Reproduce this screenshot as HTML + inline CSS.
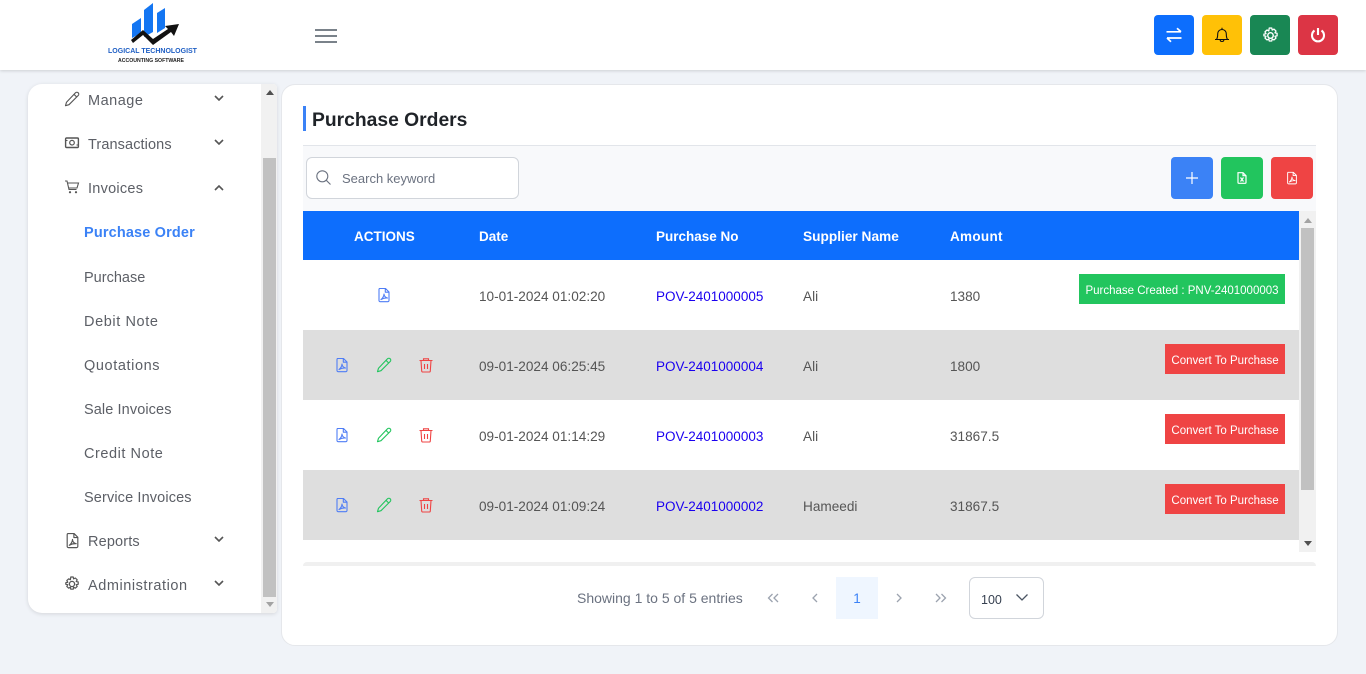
<!DOCTYPE html>
<html lang="en"><head><meta charset="utf-8"><title>Purchase Orders</title>
<style>
*{box-sizing:border-box}
html,body{margin:0;padding:0;width:1366px;height:674px;overflow:hidden;background:#f0f3f8;font-family:"Liberation Sans",sans-serif;color:#555}
.a{position:absolute}
.t{position:absolute;white-space:nowrap;line-height:20px;font-size:14px}
.nav{color:#5c5f66;font-size:14.5px;margin-top:1px}
.sub{color:#5c5f66;font-size:14.5px;margin-top:1px}
.th{color:#fff;font-weight:bold;font-size:13.5px;margin-top:1px}
.td{color:#555;font-size:13.6px;margin-top:1px}
.lnk{color:#1a00f0;font-size:13.5px;margin-top:1px}
.b{position:absolute;color:#fff;font-size:11.5px;line-height:35px;height:30px;text-align:center;white-space:nowrap}
.r{background:#ef4444;left:1165px;width:120px}
svg{position:absolute;overflow:visible;fill:none}
</style></head><body>
<svg width="0" height="0" style="position:absolute">
<defs>
<symbol id="pdf" viewBox="0 0 16 16"><path d="M3.500 1.500h6l3.500 3.500v8.500a1.200 1.200 0 0 1-1.200 1.200H4.200A1.200 1.200 0 0 1 3 13.500V2.700A1.200 1.200 0 0 1 3.500 1.500z M9.300 1.500v3.700H13 M5 12.500c1.500-1 3-3.500 3-5.500 0 2 1.500 3.700 3.500 4-2-.2-4.500.3-6.500 1.500z" stroke="currentColor" stroke-width="1.100" fill="none" stroke-linejoin="round"/></symbol>
<symbol id="pen" viewBox="0 0 16 16"><path d="M11.500 1.800a1.700 1.700 0 0 1 2.700 2.700L5 13.700l-3.500 1 1-3.500zM10 3.300l2.700 2.700" stroke="currentColor" stroke-width="1.100" fill="none" stroke-linejoin="round"/></symbol>
<symbol id="trash" viewBox="0 0 16 16"><path d="M1.500 3.500h13M5.500 3.500V1.800h5v1.700M3 3.500l.7 10.500a1 1 0 0 0 1 1h6.600a1 1 0 0 0 1-1L13 3.500M6.500 7v5M9.500 7v5" stroke="currentColor" stroke-width="1.100" fill="none"/></symbol>
<symbol id="chev" viewBox="0 0 10 6"><path d="M1 1l4 4 4-4" stroke="#555" stroke-width="1.600" fill="none"/></symbol>
<symbol id="gear" viewBox="0 0 16 16"><circle cx="8" cy="8" r="2.600" stroke="currentColor" stroke-width="1.300" fill="none"/><path d="M6.800 1h2.400l.4 1.900 1.700-.9 1.900 1.800-1 1.700 2 .4v2.400l-2 .4 1 1.700-1.900 1.800-1.700-.9-.4 1.900H6.800l-.4-1.900-1.700.9-1.900-1.800 1-1.700-2-.4V6.700l2-.4-1-1.700L4.700 2.800l1.700.9z" stroke="currentColor" stroke-width="1.200" stroke-linejoin="round" fill="none"/></symbol>
</defs></svg>

<!-- Header -->
<div class="a" style="left:0;top:0;width:1366px;height:70px;background:#fff;box-shadow:0 1px 3px rgba(0,0,0,.15)"></div>
<svg style="left:100px;top:0" width="105" height="70" viewBox="0 0 105 70">
<path d="M32 24L41 18V33L32 38zM44 10L53 3V32L44 37zM57 13L65 8V28L57 33z" fill="#1476f2"/>
<path d="M31 40L43 30L53 39L68 29L65 26L79 24L74 36L71 32L53 45L43 35L33 43z" fill="#111"/>
</svg>
<div class="t" style="left:108px;top:47px;line-height:10px;font-size:7px;font-weight:bold;color:#1f5fc4;width:89px;text-align:center">LOGICAL TECHNOLOGIST</div>
<div class="t" style="left:118px;top:56px;line-height:10px;font-size:5.200px;font-weight:bold;color:#222;width:65px;text-align:center">ACCOUNTING SOFTWARE</div>
<div class="a" style="left:315px;top:29px;width:22px;height:2px;background:#7a828a"></div>
<div class="a" style="left:315px;top:35px;width:22px;height:2px;background:#7a828a"></div>
<div class="a" style="left:315px;top:41px;width:22px;height:2px;background:#7a828a"></div>

<div class="a" style="left:1154px;top:15px;width:40px;height:40px;background:#0d6efd;border-radius:4px"></div>
<svg style="left:1166px;top:27px" width="16" height="16" viewBox="0 0 16 16"><path d="M.5 4.800h14.500M11 1.200l4 3.600M15.500 11H1M5 14.800L1 11" stroke="#fff" stroke-width="1.700"/></svg>
<div class="a" style="left:1202px;top:15px;width:40px;height:40px;background:#ffc107;border-radius:4px"></div>
<svg style="left:1214px;top:27px" width="16" height="16" viewBox="0 0 16 16"><path d="M1 12.500h14M2.500 12.500c1-1.500 1.200-3 1.200-5.500 0-2.600 1.800-4.500 4.300-4.500s4.300 1.900 4.300 4.500c0 2.500.2 4 1.200 5.500M6.200 13c0 2 3.600 2 3.600 0M8 .8v1.700" stroke="#111" stroke-width="1.100"/></svg>
<div class="a" style="left:1250px;top:15px;width:40px;height:40px;background:#198754;border-radius:4px"></div>
<svg style="left:1261.500px;top:26.500px;color:#fff" width="17" height="17"><use href="#gear"/></svg>
<div class="a" style="left:1298px;top:15px;width:40px;height:40px;background:#dc3545;border-radius:4px"></div>
<svg style="left:1310px;top:27px" width="16" height="16" viewBox="0 0 16 16"><path d="M8 1v7M4.500 3.500a6 6 0 1 0 7 0" stroke="#fff" stroke-width="2.100"/></svg>

<!-- Sidebar -->
<div class="a" style="left:28px;top:84px;width:249px;height:529px;background:#fff;border-radius:14px 4px 4px 14px;box-shadow:0 1px 4px rgba(0,0,0,.12)"></div>
<div class="a" style="left:261px;top:84px;width:16px;height:529px;background:#f1f1f1;border-radius:0 4px 4px 0"></div>
<div class="a" style="left:263px;top:158px;width:13px;height:439px;background:#c1c1c1"></div>
<div class="a" style="left:266px;top:90px;width:0;height:0;border-left:4px solid transparent;border-right:4px solid transparent;border-bottom:5px solid #505050"></div>
<div class="a" style="left:266px;top:602px;width:0;height:0;border-left:4px solid transparent;border-right:4px solid transparent;border-top:5px solid #a3a3a3"></div>

<svg style="left:64px;top:91px;color:#555" width="16" height="16"><use href="#pen"/></svg>
<div class="t nav" style="left:88px;top:90px;letter-spacing:.5px">Manage</div>
<svg style="left:214px;top:95px" width="10" height="6"><use href="#chev"/></svg>
<svg style="left:65px;top:136px" width="14" height="14" viewBox="0 0 14 14"><rect x=".6" y="2" width="12.800" height="9.500" rx="1" stroke="#555" stroke-width="1.400"/><circle cx="7" cy="6.700" r="2.300" stroke="#555" stroke-width="1.200"/><path d="M.5 4.500h2M11.500 9h2" stroke="#555"/></svg>
<div class="t nav" style="left:88px;top:134px;letter-spacing:.1px">Transactions</div>
<svg style="left:214px;top:139px" width="10" height="6"><use href="#chev"/></svg>
<svg style="left:65px;top:180px" width="14" height="14" viewBox="0 0 14 14"><path d="M0 1h2l2 8.500h7.500M3 3h10.500l-1.500 5H4" stroke="#555" stroke-width="1.100"/><circle cx="5" cy="12.200" r="1.100" fill="#555"/><circle cx="11" cy="12.200" r="1.100" fill="#555"/></svg>
<div class="t nav" style="left:88px;top:178px;letter-spacing:.25px">Invoices</div>
<svg style="left:214px;top:185px;transform:rotate(180deg)" width="10" height="6"><use href="#chev"/></svg>

<div class="t" style="left:84px;top:223px;color:#3b82f6;font-weight:bold;font-size:14.500px;letter-spacing:.15px">Purchase Order</div>
<div class="t sub" style="left:84px;top:267px">Purchase</div>
<div class="t sub" style="left:84px;top:311px;letter-spacing:.6px">Debit Note</div>
<div class="t sub" style="left:84px;top:355px;letter-spacing:.6px">Quotations</div>
<div class="t sub" style="left:84px;top:399px;letter-spacing:.1px">Sale Invoices</div>
<div class="t sub" style="left:84px;top:443px;letter-spacing:.55px">Credit Note</div>
<div class="t sub" style="left:84px;top:487px;letter-spacing:.13px">Service Invoices</div>

<svg style="left:64px;top:532px;color:#555" width="17" height="17"><use href="#pdf"/></svg>
<div class="t nav" style="left:88px;top:531px;letter-spacing:.15px">Reports</div>
<svg style="left:214px;top:536px" width="10" height="6"><use href="#chev"/></svg>
<svg style="left:64px;top:576px;color:#555" width="16" height="16"><use href="#gear"/></svg>
<div class="t nav" style="left:88px;top:575px;letter-spacing:.55px">Administration</div>
<svg style="left:214px;top:580px" width="10" height="6"><use href="#chev"/></svg>

<!-- Card -->
<div class="a" style="left:281px;top:84px;width:1057px;height:562px;background:#fff;border:1px solid #e5e7eb;border-radius:14px"></div>
<div class="a" style="left:303px;top:106px;width:3px;height:25px;background:#3b82f6"></div>
<div class="t" style="left:312px;top:109px;line-height:24px;font-size:19.300px;font-weight:bold;color:#1f2328">Purchase Orders</div>
<div class="a" style="left:303px;top:145px;width:1013px;height:66px;background:#f8f9fb;border-top:1px solid #e2e5ea"></div>
<div class="a" style="left:306px;top:157px;width:213px;height:42px;background:#fff;border:1px solid #d1d5db;border-radius:6px"></div>
<svg style="left:316px;top:170px" width="15" height="15" viewBox="0 0 15 15"><circle cx="6.300" cy="6.300" r="5.500" stroke="#6b7280" stroke-width="1.100"/><path d="M10.300 10.300l4.200 4.200" stroke="#6b7280" stroke-width="1.100"/></svg>
<div class="t" style="left:342px;top:169px;font-size:13px;color:#6b7280">Search keyword</div>

<div class="a" style="left:1171px;top:157px;width:42px;height:42px;background:#3b82f6;border-radius:4px"></div>
<svg style="left:1186px;top:172px" width="12" height="12"><path d="M6 0v12M0 6h12" stroke="#fff" stroke-width="1.200"/></svg>
<div class="a" style="left:1221px;top:157px;width:42px;height:42px;background:#22c55e;border-radius:4px"></div>
<svg style="left:1236px;top:172px" width="12" height="12" viewBox="0 0 12 12"><path d="M2 .7h5l3 3v6.800a.8.8 0 0 1-.8.800H2.800a.8.8 0 0 1-.8-.8zM7 .7v3h3M4.500 5.500l3 4M7.500 5.500l-3 4" stroke="#fff" stroke-width="1.200"/></svg>
<div class="a" style="left:1271px;top:157px;width:42px;height:42px;background:#ef4444;border-radius:4px"></div>
<svg style="left:1285px;top:171px;color:#fff" width="14" height="14"><use href="#pdf"/></svg>

<!-- Table -->
<div class="a" style="left:303px;top:211px;width:996px;height:49px;background:#0d6efd"></div>
<div class="t th" style="left:354px;top:226px">ACTIONS</div>
<div class="t th" style="left:479px;top:226px">Date</div>
<div class="t th" style="left:656px;top:226px">Purchase No</div>
<div class="t th" style="left:803px;top:226px;font-size:13.700px">Supplier Name</div>
<div class="t th" style="left:950px;top:226px;letter-spacing:.3px">Amount</div>

<div class="a" style="left:303px;top:330px;width:996px;height:70px;background:#dedede"></div>
<div class="a" style="left:303px;top:470px;width:996px;height:70px;background:#dedede"></div>

<svg style="left:376px;top:287px;color:#4f7df5" width="16" height="16"><use href="#pdf"/></svg>
<div class="t td" style="left:479px;top:286px">10-01-2024 01:02:20</div>
<div class="t lnk" style="left:656px;top:286px">POV-2401000005</div>
<div class="t td" style="left:803px;top:286px">Ali</div>
<div class="t td" style="left:950px;top:286px">1380</div>
<div class="b" style="left:1079px;top:274px;width:206px;background:#22c55e">Purchase Created : PNV-2401000003</div>

<svg style="left:334px;top:357px;color:#4f7df5" width="16" height="16"><use href="#pdf"/></svg>
<svg style="left:376px;top:357px;color:#22c55e" width="16" height="16"><use href="#pen"/></svg>
<svg style="left:418px;top:357px;color:#ef4444" width="16" height="16"><use href="#trash"/></svg>
<div class="t td" style="left:479px;top:356px">09-01-2024 06:25:45</div>
<div class="t lnk" style="left:656px;top:356px">POV-2401000004</div>
<div class="t td" style="left:803px;top:356px">Ali</div>
<div class="t td" style="left:950px;top:356px">1800</div>
<div class="b r" style="top:344px">Convert To Purchase</div>

<svg style="left:334px;top:427px;color:#4f7df5" width="16" height="16"><use href="#pdf"/></svg>
<svg style="left:376px;top:427px;color:#22c55e" width="16" height="16"><use href="#pen"/></svg>
<svg style="left:418px;top:427px;color:#ef4444" width="16" height="16"><use href="#trash"/></svg>
<div class="t td" style="left:479px;top:426px">09-01-2024 01:14:29</div>
<div class="t lnk" style="left:656px;top:426px">POV-2401000003</div>
<div class="t td" style="left:803px;top:426px">Ali</div>
<div class="t td" style="left:950px;top:426px">31867.5</div>
<div class="b r" style="top:414px">Convert To Purchase</div>

<svg style="left:334px;top:497px;color:#4f7df5" width="16" height="16"><use href="#pdf"/></svg>
<svg style="left:376px;top:497px;color:#22c55e" width="16" height="16"><use href="#pen"/></svg>
<svg style="left:418px;top:497px;color:#ef4444" width="16" height="16"><use href="#trash"/></svg>
<div class="t td" style="left:479px;top:496px">09-01-2024 01:09:24</div>
<div class="t lnk" style="left:656px;top:496px">POV-2401000002</div>
<div class="t td" style="left:803px;top:496px">Hameedi</div>
<div class="t td" style="left:950px;top:496px">31867.5</div>
<div class="b r" style="top:484px">Convert To Purchase</div>

<!-- Table scrollbar -->
<div class="a" style="left:1299px;top:211px;width:17px;height:341px;background:#f1f1f1"></div>
<div class="a" style="left:1301px;top:228px;width:13px;height:262px;background:#c1c1c1"></div>
<div class="a" style="left:1304px;top:218px;width:0;height:0;border-left:4px solid transparent;border-right:4px solid transparent;border-bottom:5px solid #a3a3a3"></div>
<div class="a" style="left:1304px;top:541px;width:0;height:0;border-left:4px solid transparent;border-right:4px solid transparent;border-top:5px solid #505050"></div>
<div class="a" style="left:303px;top:562px;width:1013px;height:4px;background:#f0f0f0;border-radius:4px 4px 0 0"></div>

<!-- Pagination -->
<div class="t" style="left:577px;top:588px;font-size:14px;color:#6b7280">Showing 1 to 5 of 5 entries</div>
<svg style="left:767px;top:593px" width="12" height="10"><path d="M5.500 1L1.500 5l4 4M11 1L7 5l4 4" stroke="#9ca3af" stroke-width="1.300"/></svg>
<svg style="left:812px;top:593px" width="6" height="10"><path d="M5 1L1 5l4 4" stroke="#9ca3af" stroke-width="1.300"/></svg>
<div class="a" style="left:836px;top:577px;width:42px;height:42px;background:#eff6ff"></div>
<div class="t" style="left:836px;top:589px;width:42px;text-align:center;font-size:13.500px;color:#3b82f6">1</div>
<svg style="left:896px;top:593px" width="6" height="10"><path d="M1 1l4 4-4 4" stroke="#9ca3af" stroke-width="1.300"/></svg>
<svg style="left:935px;top:593px" width="12" height="10"><path d="M1 1l4 4-4 4M6.500 1l4 4-4 4" stroke="#9ca3af" stroke-width="1.300"/></svg>
<div class="a" style="left:969px;top:577px;width:75px;height:42px;background:#fff;border:1px solid #d1d5db;border-radius:6px"></div>
<div class="t" style="left:981px;top:590px;font-size:12.500px;color:#374151">100</div>
<svg style="left:1016px;top:594px" width="12" height="7"><path d="M.5.500L6 6l5.500-5.500" stroke="#4b5563" stroke-width="1.300"/></svg>
</body></html>
